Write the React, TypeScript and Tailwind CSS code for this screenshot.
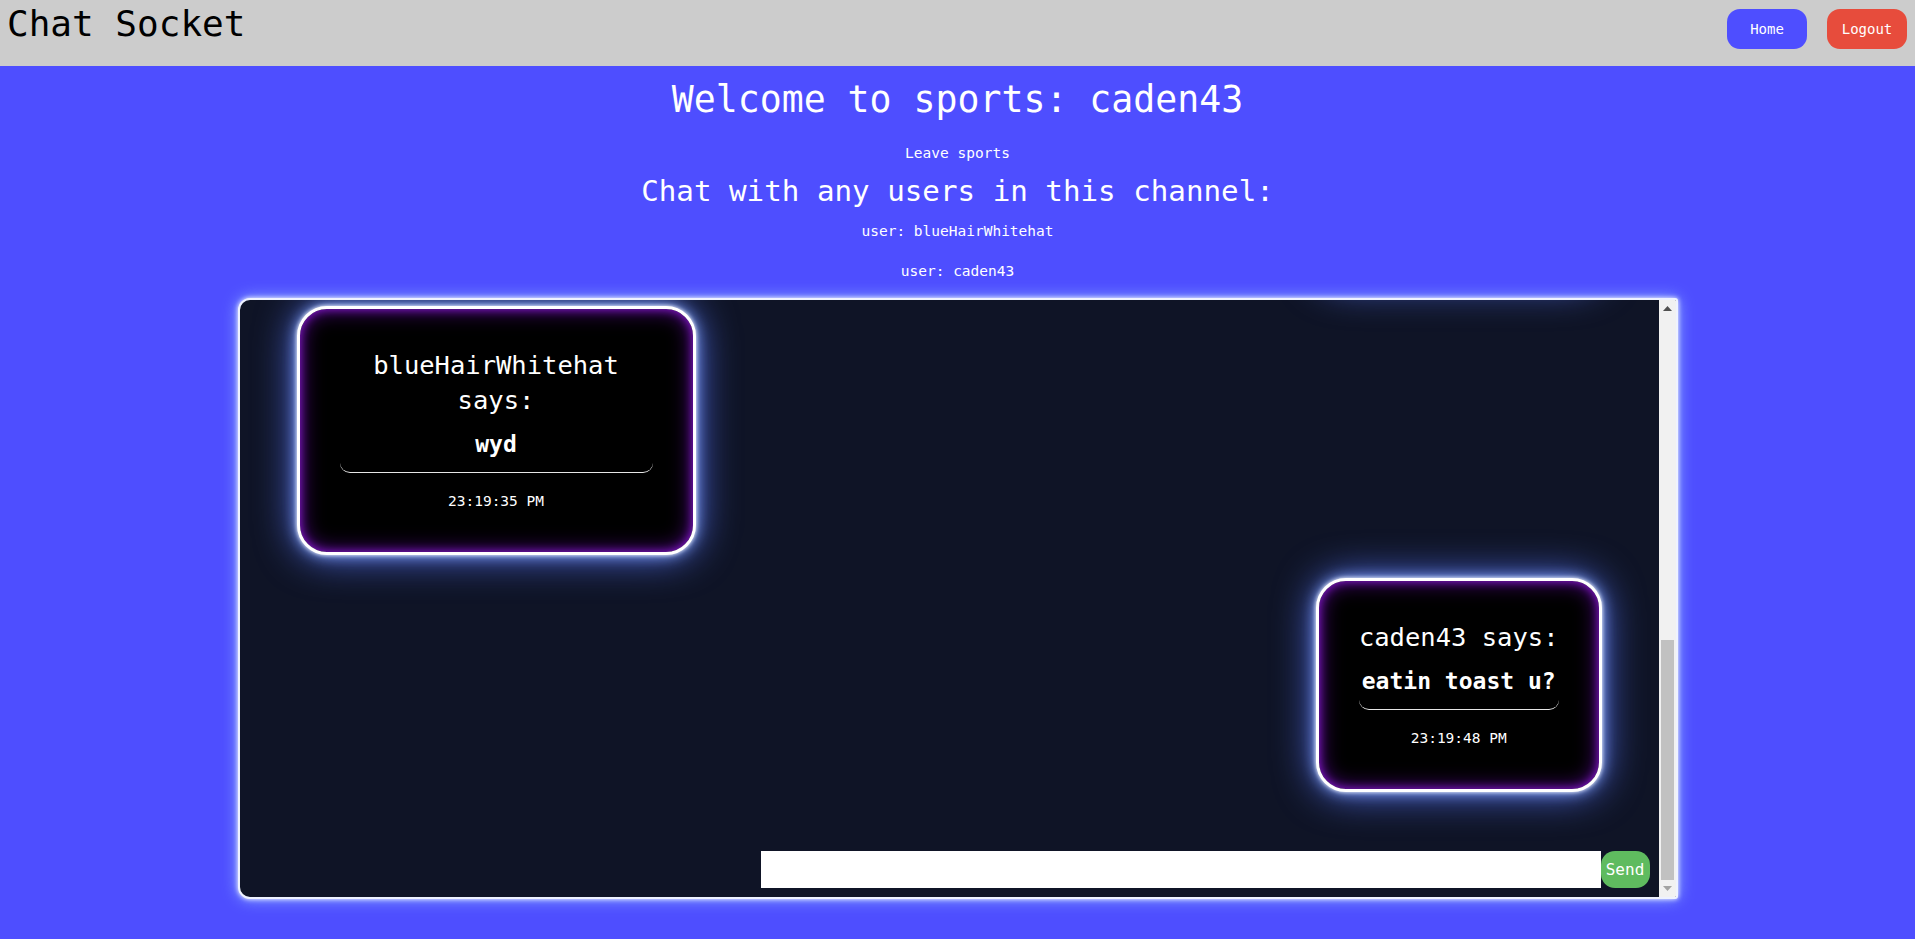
import React from "react";

type BubbleProps = { name: string; text: string; time: string; side: "left" | "right" };

function Bubble({ name, text, time, side }: BubbleProps) {
  return (
    <div className={side === "right" ? "flex shrink-0 justify-end pr-[57px]" : "flex shrink-0 justify-start pl-[57px]"}>
      <div className="w-fit max-w-[399px] rounded-[30px] border-[3px] border-white bg-black px-[40px] pt-[39px] pb-[41px] text-center text-white shadow-[0_0_4px_#ffffff,0_0_14px_#8fb0ff,0_0_40px_#5a78ff,inset_0_0_10px_#8a18d0,inset_0_0_22px_#5a0c96]">
        <div className="text-[25.5px] leading-[35px]">{name} says:</div>
        <div className="mt-[11px] rounded-[10px] border-b border-[#e6e6e6] pb-[13px] text-[23px] font-bold leading-[30px]">
          {text}
        </div>
        <div className="mt-[18px] text-[14.5px] leading-[20px]">{time}</div>
      </div>
    </div>
  );
}

export default function App() {
  return (
    <div className="flex min-h-[939px] flex-col bg-[#4e4eff] font-['DejaVu_Sans_Mono','Liberation_Mono',monospace]">
      <header className="flex h-[66px] shrink-0 items-start justify-between bg-[#cccccc]">
        <h1 className="pl-[7px] pt-[6px] text-[36px] leading-none font-normal text-black">Chat Socket</h1>
        <div className="flex gap-[20px] pt-[9px] pr-[8px]">
          <button className="flex h-[40px] w-[80px] items-center justify-center rounded-[13px] bg-[#4e4eff] text-[14px] text-white">
            Home
          </button>
          <button className="flex h-[40px] w-[80px] items-center justify-center rounded-[13px] bg-[#e74c3c] text-[14px] text-white">
            Logout
          </button>
        </div>
      </header>

      <main className="flex flex-col items-center text-white">
        <h1 className="mt-[16px] text-[36.5px] leading-none font-normal">Welcome to sports: caden43</h1>
        <div className="mt-[27px] text-[14.5px] leading-none">Leave sports</div>
        <h2 className="mt-[17px] text-[29.2px] leading-none font-normal">Chat with any users in this channel:</h2>
        <div className="mt-[18px] text-[14.5px] leading-none">user: blueHairWhitehat</div>
        <div className="mt-[25px] text-[14.5px] leading-none">user: caden43</div>

        <div className="mt-[20px] flex h-[601px] w-[1440px] overflow-hidden rounded-l-[12px] rounded-r-[3px] border-2 border-[#eef2ff] bg-[#0f1426] shadow-[0_0_5px_#ffffff,0_0_16px_#8fb4ff]">
          <div className="flex min-w-0 flex-1 flex-col">
            <div className="flex min-h-0 flex-1 flex-col justify-end gap-[23px] overflow-hidden pb-[59px]">
              <div className="flex shrink-0 justify-end pr-[57px]">
                <div className="h-[214px] w-[286px] rounded-[30px] border-[3px] border-white bg-black shadow-[0_0_4px_#ffffff,0_0_14px_#8fb0ff,0_0_40px_#5a78ff]" />
              </div>
              <Bubble side="left" name="blueHairWhitehat" text="wyd" time="23:19:35 PM" />
              <Bubble side="right" name="caden43" text="eatin toast u?" time="23:19:48 PM" />
            </div>
            <div className="flex shrink-0 items-center justify-end pr-[9px] pb-[9px]">
              <input className="h-[37px] w-[840px] bg-white px-2 text-black outline-none" />
              <button className="flex h-[37px] w-[49px] items-center justify-center rounded-[14px] bg-[#5fbb5f] text-[16px] text-white">
                Send
              </button>
            </div>
          </div>
          <div className="flex w-[17px] shrink-0 flex-col bg-[#f1f1f1]">
            <div className="flex h-[17px] items-center justify-center">
              <svg width="9" height="5" viewBox="0 0 9 5">
                <polygon points="0,5 4.5,0 9,5" fill="#505050" />
              </svg>
            </div>
            <div className="flex flex-1 flex-col justify-end">
              <div className="mx-[2px] h-[240px] bg-[#c1c1c1]" />
            </div>
            <div className="flex h-[17px] items-center justify-center">
              <svg width="9" height="5" viewBox="0 0 9 5">
                <polygon points="0,0 9,0 4.5,5" fill="#a3a3a3" />
              </svg>
            </div>
          </div>
        </div>
      </main>
    </div>
  );
}
